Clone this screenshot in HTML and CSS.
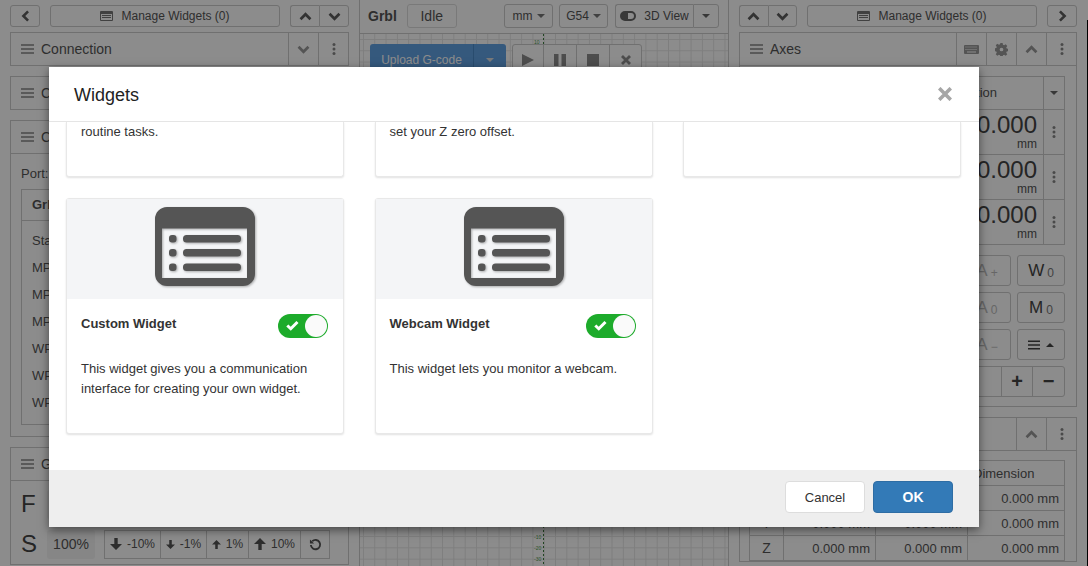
FILE: index.html
```html
<!DOCTYPE html>
<html lang="en">
<head>
<meta charset="utf-8">
<title>Widgets</title>
<link rel="stylesheet" href="styles.css">
</head>
<body>
<svg class="defs" width="0" height="0" aria-hidden="true">
  <symbol id="i-up" viewBox="0 0 14 10"><path d="M1.500 8 7 2.500 12.500 8" fill="none" stroke="currentColor" stroke-width="3"/></symbol>
  <symbol id="i-down" viewBox="0 0 14 10"><path d="M1.500 2 7 7.500 12.500 2" fill="none" stroke="currentColor" stroke-width="3"/></symbol>
  <symbol id="i-left" viewBox="0 0 10 14"><path d="M8 1.500 2.500 7 8 12.500" fill="none" stroke="currentColor" stroke-width="3"/></symbol>
  <symbol id="i-right" viewBox="0 0 10 14"><path d="M2 1.500 7.500 7 2 12.500" fill="none" stroke="currentColor" stroke-width="3"/></symbol>
  <symbol id="i-bars" viewBox="0 0 13 10"><path d="M0 1h13M0 5h13M0 9h13" fill="none" stroke="currentColor" stroke-width="1.600"/></symbol>
  <symbol id="i-dots" viewBox="0 0 4 12"><circle cx="2" cy="1.600" r="1.500" fill="currentColor"/><circle cx="2" cy="6" r="1.500" fill="currentColor"/><circle cx="2" cy="10.400" r="1.500" fill="currentColor"/></symbol>
  <symbol id="i-list" viewBox="0 0 13 10"><path d="M1 0h11a1 1 0 0 1 1 1v8a1 1 0 0 1-1 1H1a1 1 0 0 1-1-1V1a1 1 0 0 1 1-1zm0 3v6h11V3zm1 1h9v1H2zm0 2h9v1H2z" fill="currentColor" fill-rule="evenodd"/></symbol>
  <symbol id="i-arrow-down" viewBox="0 0 12 12"><path d="M4.300 0h3.400v6H12L6 12 0 6h4.300z" fill="currentColor"/></symbol>
  <symbol id="i-arrow-up" viewBox="0 0 12 12"><path d="M4.300 12h3.400V6H12L6 0 0 6h4.300z" fill="currentColor"/></symbol>
  <symbol id="i-widget" viewBox="0 0 100 79">
    <path fill-rule="evenodd" fill="#555" d="M12 0h76a12 12 0 0 1 12 12v55a12 12 0 0 1-12 12H12A12 12 0 0 1 0 67V12A12 12 0 0 1 12 0zM7 21.500V71h85V21.500z"/>
    <rect x="14" y="28" width="7.500" height="7.500" rx="3" fill="#555"/>
    <rect x="28" y="28" width="58" height="7.500" rx="3.500" fill="#555"/>
    <rect x="14" y="42" width="7.500" height="7.500" rx="3" fill="#555"/>
    <rect x="28" y="42" width="58" height="7.500" rx="3.500" fill="#555"/>
    <rect x="14" y="56.500" width="7.500" height="7.500" rx="3" fill="#555"/>
    <rect x="28" y="56.500" width="58" height="7.500" rx="3.500" fill="#555"/>
  </symbol>
</svg>

<div class="app">
  <section class="col col-left">
    <div class="toolbar">
      <button class="btn btn-nav"><svg class="ic-v"><use href="#i-left"/></svg></button>
      <button class="btn btn-manage"><svg class="ic-list"><use href="#i-list"/></svg>Manage Widgets (0)</button>
      <div class="btn-group">
        <button class="btn btn-arrow"><svg class="ic-h"><use href="#i-up"/></svg></button>
        <button class="btn btn-arrow"><svg class="ic-h"><use href="#i-down"/></svg></button>
      </div>
    </div>
    <div class="panel">
      <div class="panel-head"><svg class="ic-bars"><use href="#i-bars"/></svg><span class="panel-title">Connection</span>
        <span class="head-btn"><svg class="ic-h"><use href="#i-down"/></svg></span>
        <span class="head-btn"><svg class="ic-dots"><use href="#i-dots"/></svg></span>
      </div>
    </div>
    <div class="panel">
      <div class="panel-head"><svg class="ic-bars"><use href="#i-bars"/></svg><span class="panel-title">C</span></div>
    </div>
    <div class="panel">
      <div class="panel-head ruled"><svg class="ic-bars"><use href="#i-bars"/></svg><span class="panel-title">C</span></div>
      <div class="panel-body">
        <div class="port">Port:</div>
        <div class="ctable">
          <div class="ctable-head">Grbl</div>
          <div class="ctable-rows">
            <span>State</span><span>MPos X</span><span>MPos Y</span><span>MPos Z</span><span>WPos X</span><span>WPos Y</span><span>WPos Z</span>
          </div>
        </div>
      </div>
    </div>
    <div class="panel">
      <div class="panel-head ruled"><svg class="ic-bars"><use href="#i-bars"/></svg><span class="panel-title">G</span></div>
      <div class="ovr">
        <div class="ovr-row"><span class="ovr-letter">F</span><span class="ovr-val"></span></div>
        <div class="ovr-row">
          <span class="ovr-letter">S</span>
          <span class="ovr-val">100%</span>
          <div class="ovr-group">
            <span class="ovr-btn w-56"><svg class="arrow-big"><use href="#i-arrow-down"/></svg>-10%</span>
            <span class="ovr-btn w-46"><svg class="arrow-small"><use href="#i-arrow-down"/></svg>-1%</span>
            <span class="ovr-btn w-42"><svg class="arrow-small"><use href="#i-arrow-up"/></svg>1%</span>
            <span class="ovr-btn w-52"><svg class="arrow-big"><use href="#i-arrow-up"/></svg>10%</span>
            <span class="ovr-btn w-28">
              <svg class="ic-undo" viewBox="0 0 14 14"><path d="M3.500 3.500A5 5 0 1 1 2 7.500" fill="none" stroke="currentColor" stroke-width="2"/><path d="M1 1.500v4.500h4.500z" fill="currentColor"/></svg>
            </span>
          </div>
        </div>
      </div>
    </div>
  </section>

  <section class="col col-mid">
    <header class="mid-bar">
      <strong class="brand">Grbl</strong>
      <span class="state">Idle</span>
      <span class="spacer"></span>
      <span class="btn drop w-49">mm<i class="caret"></i></span>
      <span class="btn drop w-49">G54<i class="caret"></i></span>
      <div class="view-group">
        <span class="btn view"><i class="toggle"></i>3D View</span>
        <span class="btn view-caret"><i class="caret dark"></i></span>
      </div>
    </header>
    <div class="canvas">
      <div class="axis-line"></div>
      <span class="tick tick-a">10</span>
      <span class="tick tick-b">-10</span>
      <span class="tick tick-c">-20</span>
      <span class="tick tick-d">-30</span>
      <div class="canvas-tools">
        <div class="upload"><span class="upload-label">Upload G-code</span><span class="upload-caret"><i class="caret light"></i></span></div>
        <div class="play-group">
          <span class="play-btn"><svg class="ic-play" viewBox="0 0 12 12"><path d="M0 0 12 6 0 12z" fill="currentColor"/></svg></span>
          <span class="play-btn"><svg class="ic-play" viewBox="0 0 12 12"><path d="M0 0h4.500v12H0zM7.500 0H12v12H7.500z" fill="currentColor"/></svg></span>
          <span class="play-btn"><svg class="ic-play" viewBox="0 0 12 12"><path d="M0 0h12v12H0z" fill="currentColor"/></svg></span>
          <span class="play-btn"><svg class="ic-play" viewBox="0 0 12 12"><path d="M2 2l8 8M10 2l-8 8" stroke="currentColor" stroke-width="2.800" fill="none"/></svg></span>
        </div>
      </div>
    </div>
  </section>

  <section class="col col-right">
    <div class="toolbar">
      <div class="btn-group">
        <button class="btn btn-arrow"><svg class="ic-h"><use href="#i-up"/></svg></button>
        <button class="btn btn-arrow"><svg class="ic-h"><use href="#i-down"/></svg></button>
      </div>
      <button class="btn btn-manage"><svg class="ic-list"><use href="#i-list"/></svg>Manage Widgets (0)</button>
      <button class="btn btn-nav"><svg class="ic-v"><use href="#i-right"/></svg></button>
    </div>
    <div class="panel">
      <div class="panel-head ruled"><svg class="ic-bars"><use href="#i-bars"/></svg><span class="panel-title">Axes</span>
        <span class="head-btn"><svg class="ic-kbd" viewBox="0 0 15 9"><path fill="currentColor" fill-rule="evenodd" d="M1 0h13a1 1 0 0 1 1 1v7a1 1 0 0 1-1 1H1a1 1 0 0 1-1-1V1a1 1 0 0 1 1-1zm.500 1.500v1h1v-1zm2 0v1h1v-1zm2 0v1h1v-1zm2 0v1h1v-1zm2 0v1h1v-1zm2 0v1h1v-1zm-10 2.500v1h1V4zm2 0v1h1V4zm2 0v1h1V4zm2 0v1h1V4zm2 0v1h1V4zm2 0v1h1V4zM3 6.500v1h9v-1z"/></svg></span>
        <span class="head-btn"><svg class="ic-gear" viewBox="0 0 14 14"><path fill="currentColor" fill-rule="evenodd" d="M5.800 0h2.400l.4 2 1.200.5 1.700-1.100 1.700 1.700-1.100 1.700.5 1.200 2 .4v2.400l-2 .4-.5 1.200 1.100 1.700-1.700 1.700-1.700-1.100-1.200.5-.4 2H5.800l-.4-2-1.200-.5-1.700 1.100-1.700-1.700 1.100-1.700-.5-1.200-2-.4V5.800l2-.4.500-1.200-1.100-1.700 1.700-1.700 1.700 1.100 1.200-.5zM7 5a2 2 0 1 0 0 4 2 2 0 0 0 0-4z"/></svg></span>
        <span class="head-btn"><svg class="ic-h"><use href="#i-up"/></svg></span>
        <span class="head-btn"><svg class="ic-dots"><use href="#i-dots"/></svg></span>
      </div>
      <div class="axes-body">
        <div class="axes-table">
          <div class="axes-row axes-head"><span class="axes-cell">Position</span><span class="axes-side"><i class="caret dark"></i></span></div>
          <div class="axes-row"><span class="axes-cell"><span class="big-num">0.000</span><span class="unit">mm</span></span><span class="axes-side"><svg class="ic-dots"><use href="#i-dots"/></svg></span></div>
          <div class="axes-row"><span class="axes-cell"><span class="big-num">0.000</span><span class="unit">mm</span></span><span class="axes-side"><svg class="ic-dots"><use href="#i-dots"/></svg></span></div>
          <div class="axes-row"><span class="axes-cell"><span class="big-num">0.000</span><span class="unit">mm</span></span><span class="axes-side"><svg class="ic-dots"><use href="#i-dots"/></svg></span></div>
        </div>
        <div class="jog">
          <div class="jog-row"><span class="jog-btn faded">A<small>+</small></span><span class="jog-btn">W<small>0</small></span></div>
          <div class="jog-row"><span class="jog-btn faded">A<small>0</small></span><span class="jog-btn">M<small>0</small></span></div>
          <div class="jog-row"><span class="jog-btn faded">A<small>&minus;</small></span><span class="jog-btn"><svg class="ic-menu"><use href="#i-bars"/></svg><i class="caret up"></i></span></div>
          <div class="jog-row">
            <span class="step"><span class="step-cell"></span><span class="step-cell">+</span><span class="step-cell">&minus;</span></span>
          </div>
        </div>
      </div>
    </div>
    <div class="panel">
      <div class="panel-head ruled"><span class="panel-title"></span>
        <span class="head-btn"><svg class="ic-h"><use href="#i-up"/></svg></span>
        <span class="head-btn"><svg class="ic-dots"><use href="#i-dots"/></svg></span>
      </div>
      <div class="info-body">
        <table class="info">
          <tr><th class="c-axis"></th><th class="c-a"></th><th class="c-b"></th><th class="c-dim">Dimension</th></tr>
          <tr><td></td><td></td><td></td><td>0.000 mm</td></tr>
          <tr><td>Y</td><td>0.000 mm</td><td>0.000 mm</td><td>0.000 mm</td></tr>
          <tr><td>Z</td><td>0.000 mm</td><td>0.000 mm</td><td>0.000 mm</td></tr>
        </table>
      </div>
    </div>
  </section>
  <div class="edge"></div>
</div>

<div class="backdrop"></div>

<div class="modal">
  <div class="modal-head">
    <h1 class="modal-title">Widgets</h1>
    <svg class="modal-close" viewBox="0 0 14 14"><path d="M1.200 1.200l11.600 11.600M12.800 1.200 1.200 12.800" stroke="currentColor" stroke-width="3.600" fill="none"/></svg>
  </div>
  <div class="modal-body">
    <div class="cards cards-cut">
      <div class="card"><p class="card-text">routine tasks.</p></div>
      <div class="card"><p class="card-text">set your Z zero offset.</p></div>
      <div class="card"></div>
    </div>
    <div class="cards">
      <div class="card card-full">
        <div class="card-img"><svg class="widget-icon"><use href="#i-widget"/></svg></div>
        <div class="card-title-row">
          <span class="card-title">Custom Widget</span>
          <span class="switch"><svg class="check" viewBox="0 0 12 10"><path d="M1.200 5l3.200 3 6.200-6.200" fill="none" stroke="#fff" stroke-width="2.800"/></svg><i class="knob"></i></span>
        </div>
        <p class="card-desc">This widget gives you a communication interface for creating your own widget.</p>
      </div>
      <div class="card card-full">
        <div class="card-img"><svg class="widget-icon"><use href="#i-widget"/></svg></div>
        <div class="card-title-row">
          <span class="card-title">Webcam Widget</span>
          <span class="switch"><svg class="check" viewBox="0 0 12 10"><path d="M1.200 5l3.200 3 6.200-6.200" fill="none" stroke="#fff" stroke-width="2.800"/></svg><i class="knob"></i></span>
        </div>
        <p class="card-desc">This widget lets you monitor a webcam.</p>
      </div>
    </div>
  </div>
  <div class="modal-foot">
    <button class="foot-btn cancel">Cancel</button>
    <button class="foot-btn ok">OK</button>
  </div>
</div>
</body>
</html>
```

FILE: styles.css
```css
* { box-sizing: border-box; }
html, body { margin: 0; height: 100%; overflow: hidden; }
body { font-family: "Liberation Sans", Arial, sans-serif; font-size: 13px; color: #555; background: #fff; }
.defs { position: absolute; }
svg { display: block; }

.app { display: flex; height: 566px; width: 1088px; overflow: hidden; }
.col { display: flex; flex-direction: column; flex: none; }
.col-left { width: 360px; padding: 5px 10px 0; border-right: 1px solid #ccc; }
.col-mid { width: 369px; border-right: 1px solid #ccc; }
.col-right { width: 348px; padding: 5px 0 0 10px; }
.edge { width: 1px; margin: 20px 0 0 auto; background: #000; flex: none; }

.toolbar { display: flex; gap: 10px; height: 22px; margin-bottom: 5px; flex: none; }
.btn { font: inherit; color: #555; background: #fff; border: 1px solid #ccc; border-radius: 3px; display: flex; align-items: center; justify-content: center; padding: 0; }
.btn-nav { width: 30px; flex: none; }
.btn-manage { flex: 1; font-size: 12px; }
.btn-group { display: flex; width: 59px; flex: none; }
.col-right .btn-group { width: 58px; }
.btn-arrow { flex: 1; }
.btn-arrow:first-child { border-radius: 3px 0 0 3px; border-right: 0; }
.btn-arrow:last-child { border-radius: 0 3px 3px 0; }
.ic-v { width: 9px; height: 12px; color: #5d5d5d; }
.ic-h { width: 13px; height: 9px; color: #5d5d5d; }
.ic-list { width: 13px; height: 10px; margin-right: 8px; color: #777; }
.ic-bars { width: 13px; height: 10px; color: #888; flex: none; margin-right: 7px; }
.ic-dots { width: 4px; height: 12px; color: #888; }
.ic-kbd { width: 15px; height: 9px; color: #999; }
.ic-gear { width: 13px; height: 13px; color: #999; }
.ic-menu { width: 12px; height: 10px; color: #444; }

.panel { border: 1px solid #ccc; margin-bottom: 10px; flex: none; }
.panel-head { display: flex; align-items: center; height: 32px; padding-left: 10px; font-size: 14px; }
.panel-head.ruled { height: 33px; border-bottom: 1px solid #ccc; }
.panel-head .ic-h { color: #999; }
.panel-title { flex: 1; }
.head-btn { width: 30px; align-self: stretch; display: flex; align-items: center; justify-content: center; border-left: 1px solid #ccc; flex: none; }

.panel-body { padding: 10px 10px 11px; }
.port { height: 18px; line-height: 18px; padding-top: 1px; margin-bottom: 7px; box-sizing: content-box; height: 17px; }
.ctable { border: 1px solid #ccc; height: 236px; }
.ctable-head { height: 31px; line-height: 30px; padding-left: 10px; font-weight: bold; border-bottom: 1px solid #ccc; }
.ctable-rows { display: flex; flex-direction: column; gap: 9px; padding: 11px 10px; }
.ctable-rows span { line-height: 18px; }

.ovr { padding: 3px 0 0 10px; }
.ovr-row { display: flex; align-items: center; gap: 4px; height: 40px; }
.ovr-letter { font-size: 24px; width: 22px; color: #444; }
.ovr-val { width: 48px; height: 29px; background: #f4f4f4; border-radius: 3px; line-height: 29px; text-align: center; font-size: 14px; margin-right: 5px; }
.ovr-group { display: flex; border: 1px solid #ccc; height: 29px; }
.ovr-btn { display: flex; align-items: center; justify-content: center; gap: 5px; border-left: 1px solid #ccc; font-size: 12px; flex: none; }
.ovr-btn:first-child { border-left: 0; }
.arrow-big { width: 12px; height: 12px; color: #555; }
.arrow-small { width: 9px; height: 9px; color: #555; }
.w-56 { width: 55px; }
.w-46 { width: 46px; }
.w-42 { width: 42px; }
.w-52 { width: 52px; }
.w-28 { width: 29px; }
.ic-undo { width: 13px; height: 13px; }

.mid-bar { display: flex; align-items: center; gap: 6px; height: 34px; padding: 0 9px 1px 8px; border-bottom: 1px solid #ccc; flex: none; }
.brand { font-size: 14px; margin-right: 4px; }
.state { width: 50px; height: 24px; line-height: 22px; text-align: center; border: 1px solid #ddd; border-radius: 3px; font-size: 14px; background: #fff; }
.spacer { flex: 1; }
.drop { height: 24px; font-size: 12px; gap: 4px; }
.w-49 { width: 49px; }
.view-group { display: flex; height: 24px; width: 104px; margin-left: 1px; }
.view { flex: 1; gap: 8px; font-size: 12px; border-radius: 3px 0 0 3px; border-right: 0; }
.view-caret { width: 26px; border-radius: 0 3px 3px 0; }
.toggle { width: 16px; height: 10px; border-radius: 5px; border: 2px solid #666; background: linear-gradient(90deg, #666 50%, transparent 50%); }
.caret { width: 0; height: 0; border: 4px solid transparent; border-top-color: #777; border-bottom: 0; display: inline-block; }
.caret.dark { border-top-color: #666; }
.caret.light { border-top-color: #ddd; }
.caret.up { border-top: 0; border-bottom: 4px solid #444; margin-left: 3px; }

.canvas { flex: 1; padding: 10px 0 0 10px; position: relative; background-color: #fff;
  background-image: linear-gradient(#e6e6e6 1px, transparent 1px), linear-gradient(90deg, #e6e6e6 1px, transparent 1px);
  background-size: 11.300px 11.300px; background-position: 3px 5px; }
.axis-line { position: absolute; left: 183px; top: 0; bottom: 0; width: 1px; background: repeating-linear-gradient(#3f7f3f 0 2px, transparent 2px 4px); }
.tick { position: absolute; left: 174px; font-size: 5px; line-height: 6px; color: #4f9a4f; }
.tick-a { top: 5px; }
.tick-b { top: 500px; }
.tick-c { top: 511px; }
.tick-d { top: 522px; }
.canvas-tools { display: flex; gap: 6px; position: relative; }
.upload { display: flex; width: 136px; height: 32px; background: #62a2e3; color: #fff; border-radius: 3px; font-size: 12px; align-items: center; }
.upload-label { flex: 1; text-align: center; }
.upload-caret { width: 33px; height: 100%; border-left: 1px solid #4c8bc9; display: flex; align-items: center; justify-content: center; }
.play-group { display: flex; border: 1px solid #ccc; border-radius: 3px; height: 32px; background: #fff; }
.play-btn { width: 33px; display: flex; align-items: center; justify-content: center; border-left: 1px solid #ccc; color: #8c8c8c; }
.play-btn:first-child { border-left: 0; width: 30px; }
.play-btn:last-child { width: 32px; }
.ic-play { width: 12px; height: 12px; }

.axes-body { padding: 10px 11px 9px 0; display: flex; flex-direction: column; align-items: flex-end; }
.axes-table { width: 200px; border: 1px solid #ccc; }
.axes-row { display: flex; height: 45px; border-top: 1px solid #ccc; }
.axes-row:first-child { border-top: 0; height: 32px; }
.axes-cell { flex: 1; display: flex; flex-direction: column; align-items: flex-end; padding: 2px 6px 0 0; }
.axes-head .axes-cell { justify-content: center; padding: 0 46px 2px 0; }
.axes-side { width: 21px; border-left: 1px solid #ccc; display: flex; align-items: center; justify-content: center; }
.big-num { font-size: 24px; line-height: 26px; color: #444; }
.unit { font-size: 12px; line-height: 13px; }
.jog { width: 200px; display: flex; flex-direction: column; gap: 6px; margin-top: 10px; }
.jog-row { display: flex; justify-content: flex-end; gap: 6px; height: 31px; }
.jog-btn { width: 48px; border: 1px solid #ccc; border-radius: 3px; display: flex; align-items: center; justify-content: center; font-size: 17px; color: #444; gap: 3px; }
.jog-btn small { font-size: 12px; padding-top: 4px; color: #777; }
.jog-btn.faded { color: #bbb; }
.jog-btn.faded small { color: #bbb; }
.step { display: flex; border: 1px solid #ccc; border-radius: 0 3px 3px 0; width: 96px; }
.step-cell { flex: 1; display: flex; align-items: center; justify-content: center; border-left: 1px solid #ccc; font-size: 20px; font-weight: bold; color: #444; }
.step-cell:first-child { border-left: 0; }
.info-body { padding: 9px 11px 0 9px; }
.info { border-collapse: collapse; width: 316px; font-size: 13px; table-layout: fixed; }
.info th, .info td { border: 1px solid #ccc; height: 25px; padding: 0 5px; text-align: right; font-weight: normal; white-space: nowrap; }
.info th.c-axis { width: 34px; }
.info th.c-a { width: 92px; }
.info th.c-b { width: 92px; }
.info th.c-dim { text-align: left; }
.info td:first-child { text-align: center; font-size: 14px; }

.backdrop { position: absolute; inset: 0; background: rgba(0,0,0,.45); }

.modal { position: absolute; left: 49px; top: 67px; width: 930px; height: 460px; background: #fff; display: flex; flex-direction: column; box-shadow: 0 3px 9px rgba(0,0,0,.5); }
.modal-head { display: flex; align-items: center; justify-content: space-between; height: 55px; padding: 0 27px 0 25px; border-bottom: 1px solid #e5e5e5; flex: none; }
.modal-title { font-size: 18px; font-weight: normal; margin: 2px 0 0; color: #222; }
.modal-close { width: 14px; height: 14px; color: #a6a6a6; }
.modal-body { flex: 1; padding: 0 18px 0 17px; overflow: hidden; }
.cards { display: grid; grid-template-columns: repeat(3, 1fr); column-gap: 30.500px; margin-bottom: 21px; }
.card { background: #fff; border: 1px solid #e8e8e8; border-radius: 3px; box-shadow: 0 1px 2px rgba(0,0,0,.12); }
.cards-cut { height: 55px; }
.cards-cut .card { border-top: 0; border-radius: 0 0 3px 3px; }
.card-text { margin: 0; padding: 1px 14px 0; line-height: 18px; color: #333; }
.card-full { height: 236px; }
.card-img { height: 100px; background: #f4f5f7; display: flex; justify-content: center; padding-top: 8px; }
.widget-icon { width: 100px; height: 79px; filter: drop-shadow(1px 1px 1px rgba(0,0,0,.3)); }
.card-title-row { display: flex; align-items: center; justify-content: space-between; padding: 14px 15.500px 0 14px; height: 39px; }
.card-title { font-weight: bold; color: #333; margin-top: -5px; }
.switch { width: 50px; height: 24px; border-radius: 12px; background: #1dab2b; display: flex; align-items: center; justify-content: space-between; padding: 0 1px 0 8px; }
.check { width: 13px; height: 11px; }
.knob { width: 22px; height: 22px; border-radius: 50%; background: #fafafa; }
.card-desc { margin: 21px 0 0; padding: 0 14px; line-height: 20px; color: #333; width: 265px; }

.modal-foot { height: 57px; background: #eee; display: flex; align-items: center; justify-content: flex-end; gap: 8px; padding: 0 26px 3px 0; flex: none; }
.foot-btn { width: 80px; height: 32px; border-radius: 4px; font: inherit; font-size: 13px; padding: 0; }
.cancel { background: #fff; border: 1px solid #ddd; color: #333; }
.ok { background: #337ab7; border: 1px solid #2e6da4; color: #fff; font-weight: bold; font-size: 14px; }
```
